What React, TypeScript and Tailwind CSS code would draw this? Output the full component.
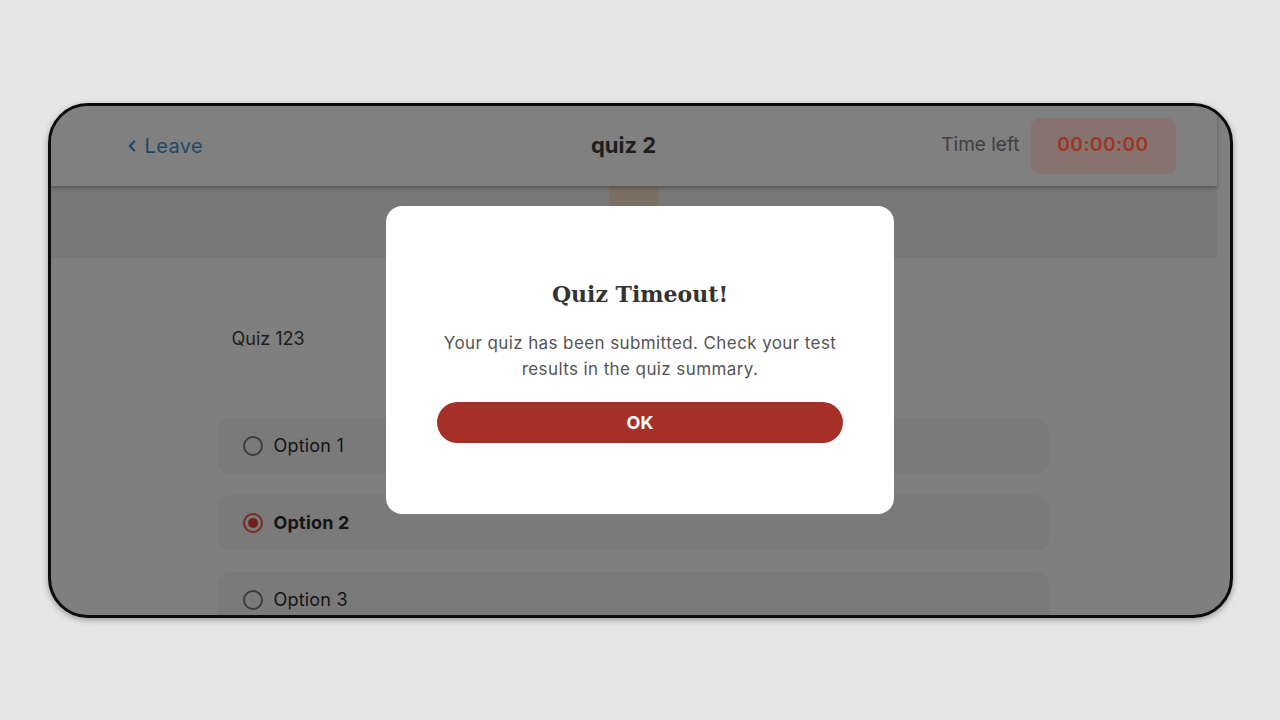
import { ChevronLeft } from "lucide-react";

const font = { fontFamily: "Inter, 'Noto Sans', sans-serif" };

function Radio({ checked }: { checked?: boolean }) {
  if (checked) {
    return (
      <span className="flex h-5 w-5 items-center justify-center rounded-full border-2 border-[#7a2a22]">
        <span className="h-[10px] w-[10px] rounded-full bg-[#6e1f18]" />
      </span>
    );
  }
  return <span className="h-5 w-5 rounded-full border-2 border-[#3c3c3c]" />;
}

function Option({ label, checked }: { label: string; checked?: boolean }) {
  return (
    <div className="flex h-[56px] items-center gap-[11px] rounded-[14px] bg-[#7a7a7a] px-[26px]">
      <Radio checked={checked} />
      <span className={`text-[18px] tracking-[0.2px] text-[#141414] ${checked ? "font-bold" : "font-normal"}`}>{label}</span>
    </div>
  );
}

export default function App() {
  return (
    <div className="flex h-screen w-screen items-center justify-center bg-[#e6e6e6]" style={font}>
      <div className="h-[515px] w-[1185px] overflow-hidden rounded-[40px] border-[3px] border-[#0c0c0c] bg-[#7f7f7f] shadow-[0_2px_6px_rgba(0,0,0,0.35)]">
        <div className="relative h-full w-full">
          <div className="flex h-full w-[1166px] flex-col">
            <header className="relative z-10 flex h-[80px] shrink-0 items-center bg-[#808080] pl-[72px] pr-[41px] shadow-[0_2px_4px_rgba(0,0,0,0.3)]">
              <div className="flex w-[355px] items-center gap-[4px] text-[#1f4868]">
                <ChevronLeft size={18} strokeWidth={3} />
                <span className="text-[20px] tracking-[0.4px]">Leave</span>
              </div>
              <div className="flex-1 text-center text-[22px] font-bold text-[#1e1e1e]">quiz 2</div>
              <div className="flex w-[406px] items-center justify-end gap-[11px]">
                <span className="text-[19px] text-[#3f3f3f]">Time left</span>
                <div className="flex h-[56px] w-[145px] items-center justify-center rounded-[9px] bg-[#86736f]">
                  <span className="text-[19px] font-semibold tracking-[0.5px] text-[#9e3522]">00:00:00</span>
                </div>
              </div>
            </header>
            <div className="flex h-[72px] shrink-0 justify-center bg-[#787878]">
              <div className="w-[50px] bg-[#7c7065]" />
            </div>
            <main className="flex flex-1 flex-col pl-[166px] pr-[168px] pt-[67px]">
              <div className="pl-[15px] text-[18px] text-[#1c1c1c]">Quiz 123</div>
              <div className="mt-[66px] flex flex-col gap-[21px]">
                <Option label="Option 1" />
                <Option label="Option 2" checked />
                <Option label="Option 3" />
              </div>
            </main>
          </div>

          <div className="absolute inset-0 flex items-center justify-center">
            <div className="flex h-[308px] w-[508px] flex-col items-center rounded-[16px] bg-white px-[51px] pt-[72px]">
              <h2
                className="text-[22px] font-bold text-[#333333]"
                style={{ fontFamily: "'DejaVu Serif', 'Liberation Serif', serif" }}
              >
                Quiz Timeout!
              </h2>
              <p className="mt-[19px] text-center text-[17px] leading-[26px] tracking-[0.4px] text-[#555555]">
                Your quiz has been submitted. Check your test
                <br />
                results in the quiz summary.
              </p>
              <button className="mt-[20px] flex h-[41px] w-full items-center justify-center rounded-full bg-[#a63027] text-[18px] font-bold text-white">
                OK
              </button>
            </div>
          </div>
        </div>
      </div>
    </div>
  );
}
